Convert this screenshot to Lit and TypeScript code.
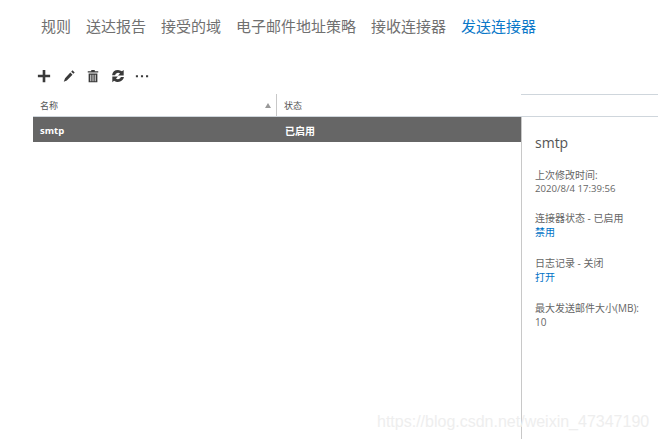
import { LitElement, html, css } from "lit";
import { customElement } from "lit/decorators.js";

@customElement("app-root")
export class AppRoot extends LitElement {
  static styles = css`
    :host { display: block; width: 658px; height: 439px; overflow: hidden; background: #fff; position: relative; font-family: "Open Sans", "Noto Sans CJK SC", sans-serif; color: #555; }
    .nav { display: flex; gap: 15px; padding: 15px 0 0 41px; height: 52px; font-size: 15px; line-height: 22px; color: #707070; }
    .nav .active { color: #0a78c8; }
    .toolbar { display: flex; align-items: center; gap: 10.5px; height: 18px; padding-left: 37px; margin-bottom: 9px; }
    .toolbar svg { display: block; width: 14px; height: 14px; fill: #3a3a3a; }
    .main { display: grid; grid-template-columns: 488px 137px; margin-left: 33px; width: 625px; height: 345px; grid-template-rows: 23px 1fr; }
    .head { display: flex; border-bottom: 1px solid #cfd6dc; font-size: 9px; color: #555; height: 23px; box-sizing: border-box; }
    .hc { display: flex; align-items: center; justify-content: space-between; box-sizing: border-box; padding: 1px 5px 0 7px; height: 22px; }
    .hc.name { width: 244px; border-right: 1px solid #c8c8c8; }
    .arrow { width: 0; height: 0; border-left: 3.5px solid transparent; border-right: 3.5px solid transparent; border-bottom: 5px solid #999; }
    .filler { border-top: 1px solid #cfd6dc; border-bottom: 1px solid #cfd6dc; height: 23px; box-sizing: border-box; }
    .list { min-width: 0; }
    .row { display: flex; height: 25px; align-items: center; padding-top: 1px; box-sizing: border-box; background: #666; color: #fff; font-size: 10px; font-weight: 700; }
    .row .a { width: 252px; padding-left: 7px; box-sizing: border-box; font-size: 9.5px; }
    .detail { border-left: 1px solid #c8c8c8; padding: 16px 0 0 13px; font-size: 10px; line-height: 14px; color: #666; }
    .title { font-size: 14px; line-height: 20px; color: #555; margin-bottom: 16px; }
    .block { margin-bottom: 17px; white-space: nowrap; }
    .block.first { line-height: 13px; margin-bottom: 16px; }
    .date { font-size: 9.6px; }
    .link { color: #0072c6; }
    .watermark { position: absolute; left: 377px; top: 412px; font-family: "Liberation Sans", sans-serif; font-size: 16px; line-height: 20px; color: #eee; white-space: nowrap; pointer-events: none; }
  `;

  render() {
    return html`
      <div class="nav">
        <span>规则</span><span>送达报告</span><span>接受的域</span><span>电子邮件地址策略</span><span>接收连接器</span><span class="active">发送连接器</span>
      </div>
      <div class="toolbar">
        <svg viewBox="0 0 16 16"><path d="M6.500 1h3v5.500H15v3H9.500V15h-3V9.500H1v-3h5.500z"/></svg>
        <svg viewBox="0 0 16 16"><path d="M12 1.500l2.500 2.500-1.500 1.500L10.500 3zM9.500 4L12 6.500 5.500 13 2 14.500 3.500 10.500z"/></svg>
        <svg viewBox="0 0 16 16"><path d="M6 1h4v1.500h4V4H2V2.500h4zM3 5h10v10H3zm2 1.500V14h1V6.500zm2.500 0V14h1V6.500zm2.500 0V14h1V6.500z"/></svg>
        <svg viewBox="0 0 16 16"><path d="M8 1a7 7 0 0 1 4.500 1.700L14.500 1v6.500H8l2.300-2.300A3.500 3.500 0 0 0 4.700 7H1.200A7 7 0 0 1 8 1zM1.500 8.500H8l-2.300 2.300A3.500 3.500 0 0 0 11.300 9h3.500a7 7 0 0 1-11.300 4.300L1.500 15z"/></svg>
        <svg viewBox="0 0 16 16"><path d="M1 7h2.400v2.400H1zM6.800 7h2.400v2.400H6.800zM12.600 7H15v2.400h-2.400z"/></svg>
      </div>
      <div class="main">
        <div class="head">
          <div class="hc name"><span>名称</span><span class="arrow"></span></div>
          <div class="hc"><span>状态</span></div>
        </div>
        <div class="filler"></div>
        <div class="list">
          <div class="row"><span class="a">smtp</span><span>已启用</span></div>
        </div>
        <div class="detail">
          <div class="title">smtp</div>
          <div class="block first">上次修改时间:<br /><span class="date">2020/8/4 17:39:56</span></div>
          <div class="block">连接器状态 - 已启用<br /><span class="link">禁用</span></div>
          <div class="block">日志记录 - 关闭<br /><span class="link">打开</span></div>
          <div class="block">最大发送邮件大小(MB):<br />10</div>
        </div>
      </div>
      <div class="watermark">https://blog.csdn.net/weixin_47347190</div>
    `;
  }
}
